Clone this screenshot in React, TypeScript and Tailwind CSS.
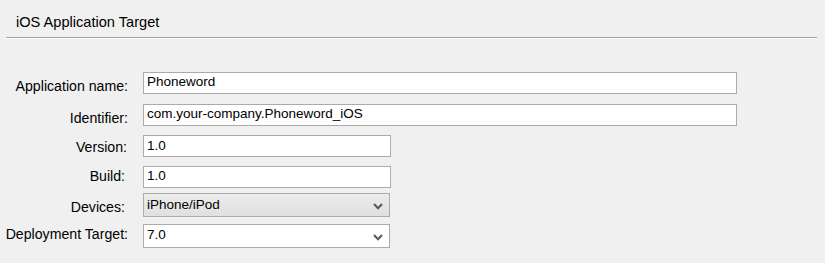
const font = { fontFamily: '"Liberation Sans", Arial, sans-serif' }

function Chevron() {
  return (
    <svg width="10" height="7" viewBox="0 0 10 7" className="shrink-0">
      <path d="M1 1 L5 5.2 L9 1" fill="none" stroke="#5a5a5a" strokeWidth="2.1" />
    </svg>
  )
}

interface RowProps {
  label: string
  labelTop: string
  labelRight?: string
  children: React.ReactNode
  className?: string
}

function Row({ label, labelTop, labelRight = 'pr-0', children, className = '' }: RowProps) {
  return (
    <div className={`flex items-start ${className}`}>
      <div className={`w-[128px] shrink-0 whitespace-nowrap text-right text-[14.15px] leading-4 ${labelTop} ${labelRight}`}>
        {label}
      </div>
      <div className="ml-[15px] text-[13.5px]">{children}</div>
    </div>
  )
}

export default function App() {
  return (
    <div className="h-[263px] w-[825px] bg-[#f0f0f0] text-[14px] text-black" style={font}>
      <div className="pl-4 pt-[14px] text-[14.6px] leading-4">iOS Application Target</div>
      <div className="mx-[6px] mt-[7px] w-[811px] border-t border-b border-t-[#a0a0a0] border-b-white" />

      <div className="mt-[33px] flex flex-col">
        <Row label="Application name:" labelTop="mt-[6px]">
          <div className="h-[22px] w-[594px] border border-[#ababab] bg-white pl-[3px] pt-[1px] leading-4">
            Phoneword
          </div>
        </Row>
        <Row label="Identifier:" labelTop="mt-[6px]" className="mt-[10px]">
          <div className="h-[22px] w-[594px] border border-[#ababab] bg-white pl-[3px] pt-[1px] leading-4">
            com.your-company.Phoneword_iOS
          </div>
        </Row>
        <Row label="Version:" labelTop="mt-[4px]" labelRight="pr-[1px]" className="mt-[9px]">
          <div className="h-[22px] w-[248px] border border-[#ababab] bg-white pl-[3px] pt-[2px] leading-4">
            1.0
          </div>
        </Row>
        <Row label="Build:" labelTop="mt-[2px]" labelRight="pr-[3px]" className="mt-[9px]">
          <div className="h-[22px] w-[248px] border border-[#ababab] bg-white pl-[3px] pt-[1px] leading-4">
            1.0
          </div>
        </Row>
        <Row label="Devices:" labelTop="mt-[6px]" labelRight="pr-[3px]" className="mt-[5px]">
          <div className="flex h-[24px] w-[247px] items-start justify-between border border-[#acacac] bg-gradient-to-b from-[#ececec] to-[#e0e0e0] pl-[3px] pr-[6px] pt-[3px] leading-4">
            <span>iPhone/iPod</span>
            <span className="pt-[6px]">
              <Chevron />
            </span>
          </div>
        </Row>
        <Row label="Deployment Target:" labelTop="mt-[2px]" className="mt-[7px]">
          <div className="flex h-[24px] w-[247px] items-start justify-between border border-[#acacac] bg-white pl-[3px] pr-[6px] pt-[2px] leading-4">
            <span>7.0</span>
            <span className="pt-[7px]">
              <Chevron />
            </span>
          </div>
        </Row>
      </div>
    </div>
  )
}
